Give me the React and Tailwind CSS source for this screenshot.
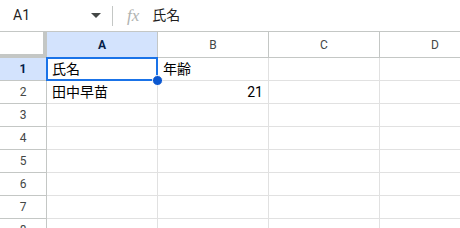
const COLS = ['A', 'B', 'C', 'D']
const ROWS = [1, 2, 3, 4, 5, 6, 7, 8]

const cells = {
  A1: { text: '氏名' },
  B1: { text: '年齢' },
  A2: { text: '田中早苗' },
  B2: { text: '21', right: true },
}

const font = { fontFamily: 'Roboto, "Noto Sans CJK JP", sans-serif' }

function Toolbar() {
  return (
    <div className="flex h-[32px] items-center border-b border-[#c4c7c5] bg-white text-[14px] text-[#1f1f1f]">
      <div className="flex w-[106px] items-center pl-[13px]">
        <span className="flex-1">A1</span>
        <svg width="10" height="5" viewBox="0 0 10 5" className="mr-[5px]">
          <path d="M0 0h10L5 5z" fill="#444746" />
        </svg>
      </div>
      <div className="mx-[6px] h-[20px] w-px bg-[#c4c7c5]" />
      <span className="ml-[8px] mr-[13px] font-['Liberation_Serif',serif] text-[17px] italic text-[#b0b3b1]">fx</span>
      <span>氏名</span>
    </div>
  )
}

function HeaderRow() {
  return (
    <div className="flex h-[26px]">
      <div className="w-[47px] shrink-0 border-r-[4px] border-b-[4px] border-[#c4c7c5] bg-white" />
      {COLS.map((c) => (
        <div
          key={c}
          className={`flex w-[111px] shrink-0 items-center justify-center border-r border-b border-[#c4c7c5] text-[12px] ${
            c === 'A' ? 'bg-[#d3e3fd] font-bold text-[#041e49]' : 'bg-white text-[#444746]'
          }`}
        >
          {c}
        </div>
      ))}
    </div>
  )
}

function Row({ n }) {
  const active = n === 1
  return (
    <div className="flex h-[23px]">
      <div
        className={`flex w-[47px] shrink-0 items-center justify-center border-r border-b border-[#c4c7c5] text-[12px] ${
          active ? 'bg-[#d3e3fd] font-bold text-[#041e49]' : 'bg-white text-[#444746]'
        }`}
      >
        {n}
      </div>
      {COLS.map((c) => {
        const cell = cells[c + n]
        const sel = c === 'A' && n === 1
        return (
          <div
            key={c}
            className={`relative flex w-[111px] shrink-0 items-center border-r border-b border-[#e1e1e1] px-[5px] text-[14px] text-black ${
              cell && cell.right ? 'justify-end' : ''
            }`}
          >
            {cell && <span>{cell.text}</span>}
            {sel && (
              <>
                <div className="absolute -left-px -top-px h-[24px] w-[112px] border-2 border-[#1a73e8]" />
                <div className="absolute -right-[6px] -bottom-[6px] z-10 h-[11px] w-[11px] rounded-full border border-white bg-[#0b57d0]" />
              </>
            )}
          </div>
        )
      })}
    </div>
  )
}

export default function App() {
  return (
    <div className="h-[228px] w-[460px] overflow-hidden bg-white" style={font}>
      <Toolbar />
      <HeaderRow />
      {ROWS.map((n) => (
        <Row key={n} n={n} />
      ))}
    </div>
  )
}
